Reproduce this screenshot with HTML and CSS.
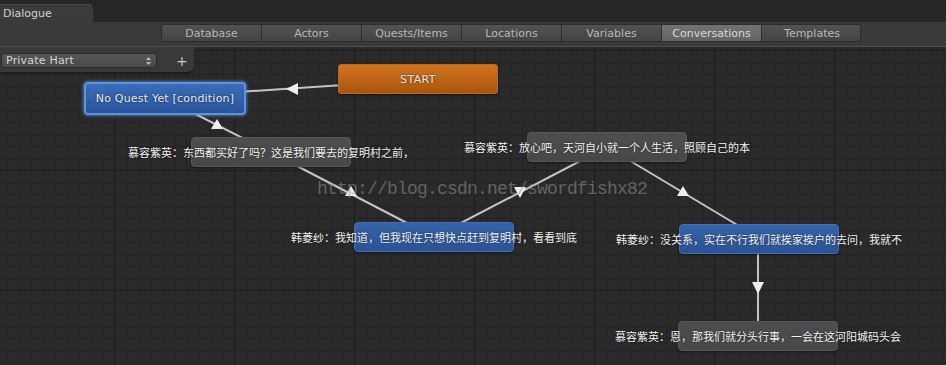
FILE: index.html
```html
<!DOCTYPE html>
<html lang="zh-CN">
<head>
<meta charset="utf-8">
<title>Dialogue</title>
<link rel="stylesheet" href="styles.css">
</head>
<body>
<div class="app">
  <div class="titlebar">
    <div class="win-tab">Dialogue</div>
  </div>
  <div class="toolbar">
    <div class="tabs">
      <div class="tab">Database</div>
      <div class="tab">Actors</div>
      <div class="tab">Quests/Items</div>
      <div class="tab">Locations</div>
      <div class="tab">Variables</div>
      <div class="tab active">Conversations</div>
      <div class="tab">Templates</div>
    </div>
  </div>
  <div class="canvas">
    <svg class="links" width="946" height="318" viewBox="0 47 946 318">
      <g stroke="#c4c4c4" stroke-width="2" fill="none">
        <line x1="418" y1="80" x2="164" y2="97"/>
        <line x1="164" y1="98" x2="270" y2="152"/>
        <line x1="270" y1="152" x2="434" y2="237"/>
        <line x1="434" y1="237" x2="607" y2="147"/>
        <line x1="607" y1="147" x2="759" y2="238"/>
        <line x1="758" y1="238" x2="758" y2="335"/>
      </g>
      <g fill="#eeeeee">
        <polygon points="286,89 298,83 298,95"/>
        <polygon points="217,119 223,129 211,129"/>
        <polygon points="351,186 357,196 345,196"/>
        <polygon points="520,198 526,187 514,187"/>
        <polygon points="683,186 689,196 677,196"/>
        <polygon points="758,294 764,282 752,282"/>
      </g>
    </svg>
    <div class="watermark">http://blog.csdn.net/swordfishx82</div>

    <div class="actor-panel">
      <div class="actor-select">
        <span>Private Hart</span>
        <svg class="updown" width="5" height="8" viewBox="0 0 5 8"><polygon points="2.5,0 5,3 0,3" fill="#bbb"/><polygon points="0,5 5,5 2.5,8" fill="#bbb"/></svg>
      </div>
      <span class="plus">+</span>
    </div>

    <div class="node start n-start"><span>START</span></div>
    <div class="node blue selected n-cond"><span>No Quest Yet [condition]</span></div>
    <div class="node gray n1"><span>慕容紫英：东西都买好了吗？这是我们要去的复明村之前，</span></div>
    <div class="node gray n2"><span>慕容紫英：放心吧，天河自小就一个人生活，照顾自己的本</span></div>
    <div class="node blue n3"><span>韩菱纱：我知道，但我现在只想快点赶到复明村，看看到底</span></div>
    <div class="node blue n4"><span>韩菱纱：没关系，实在不行我们就挨家挨户的去问，我就不</span></div>
    <div class="node gray n5"><span>慕容紫英：恩，那我们就分头行事，一会在这河阳城码头会</span></div>
  </div>
</div>
</body>
</html>
```

FILE: styles.css
```css
* { box-sizing: border-box; }
html, body { margin: 0; padding: 0; background: #282828; }
body { width: 946px; height: 365px; overflow: hidden; font-family: "DejaVu Sans", "Noto Sans CJK SC", sans-serif; }

.app { display: flex; flex-direction: column; width: 946px; height: 365px; }

.titlebar { height: 22px; background: #262626; display: flex; align-items: flex-end; }
.win-tab {
  width: 94px; height: 18px; background: #3b3b3b;
  border-top-right-radius: 5px; border-top: 1px solid #4a4a4a; border-right: 1px solid #2a2a2a;
  color: #d2d2d2; font-size: 11px; line-height: 17px; padding-left: 3px;
}

.toolbar {
  height: 25px; background: #3a3a3a;
  border-bottom: 1px solid #4e4e4e;
  padding: 2px 0 0 161px;
}
.tabs { display: flex; height: 18px; width: 700px; border-radius: 3px; overflow: hidden; border: 1px solid #2c2c2c; }
.tab {
  flex: 0 0 100px; display: flex; align-items: center; justify-content: center;
  background: linear-gradient(#525252, #444444);
  border-right: 1px solid #2e2e2e;
  color: #b8b8b8; font-size: 11px;
}
.tab:last-child { border-right: none; }
.tab.active { background: linear-gradient(#727272, #646464); color: #d8d8d8; }

.canvas {
  position: relative; flex: 1; overflow: hidden;
  background-color: #2a2a2a;
  background-image:
    linear-gradient(to right, #1d1d1d 1px, transparent 1px),
    linear-gradient(to bottom, #1d1d1d 1px, transparent 1px),
    linear-gradient(to right, #232323 1px, transparent 1px),
    linear-gradient(to bottom, #232323 1px, transparent 1px);
  background-size: 120px 120px, 120px 120px, 12px 12px, 12px 12px;
  background-position: 114px 3px, 114px 3px, 6px 3px, 6px 3px;
}

.links { position: absolute; left: 0; top: 0; }

.watermark {
  position: absolute; left: 317px; top: 132px;
  font-family: "Liberation Mono", monospace; font-size: 18px; letter-spacing: -0.8px;
  color: rgba(150, 150, 150, 0.55);
  white-space: nowrap;
}

.actor-panel {
  position: absolute; left: 0; top: 0; width: 194px; height: 25px;
  background: #393939; border-bottom-right-radius: 6px;
  box-shadow: 0 1px 2px rgba(0,0,0,0.5);
  display: flex; align-items: center; padding: 0 0 0 1px; gap: 0;
}
.actor-select {
  width: 156px; height: 15px; margin-top: 2px;
  background: linear-gradient(#565656, #4a4a4a);
  border: 1px solid #2a2a2a; border-radius: 3px;
  display: flex; align-items: center; justify-content: space-between;
  padding: 0 5px 0 4px;
  color: #d4d4d4; font-size: 11px; letter-spacing: 0.2px;
}
.plus { margin-left: 19px; margin-top: 2px; color: #c8c8c8; font-size: 14px; line-height: 14px; }

.node {
  position: absolute; width: 160px; height: 30px;
  display: flex; align-items: center; justify-content: center;
  border-radius: 4px; color: #f2f2f2;
  font-size: 11px; white-space: nowrap;
}
.node span { text-shadow: 0 0 2px rgba(0,0,0,0.6); }
.gray {
  background: linear-gradient(#4e4e4e, #474747);
  border: 1px solid #575757;
  box-shadow: 0 1px 2px rgba(0,0,0,0.5);
  font-family: "Noto Sans CJK SC", sans-serif;
}
.blue {
  background: linear-gradient(#3663a8, #2b5293);
  border: 1px solid #4271b5;
  box-shadow: 0 1px 2px rgba(0,0,0,0.5);
  font-family: "Noto Sans CJK SC", sans-serif;
}
.start {
  background: linear-gradient(#d1741f, #a9560f);
  border: 1px solid #b86a25;
  border-radius: 3px;
  color: #ececec; font-family: "DejaVu Sans", sans-serif; letter-spacing: 0.4px;
  box-shadow: 0 1px 2px rgba(0,0,0,0.5);
}
.selected {
  font-family: "DejaVu Sans", sans-serif; letter-spacing: 0.2px;
  background: linear-gradient(#3a6cb8, #2a549a);
  border: 2px solid #5b93e0;
  box-shadow: 0 0 3px 1px rgba(100,160,240,0.6);
  color: #eaeaea;
}

.n-start { left: 338px; top: 17px; }
.n-cond { left: 84px; top: 35px; width: 162px; height: 33px; }
.n1 { left: 191px; top: 90px; }
.n2 { left: 527px; top: 85px; }
.n3 { left: 354px; top: 175px; }
.n4 { left: 679px; top: 177px; }
.n5 { left: 678px; top: 274px; }
```
